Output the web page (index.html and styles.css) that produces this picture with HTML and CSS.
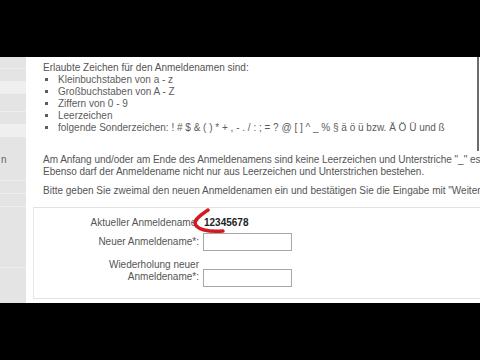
FILE: index.html
```html
<!DOCTYPE html>
<html lang="de">
<head>
    <meta charset="UTF-8">
    <meta name="viewport" content="width=device-width, initial-scale=1.0">
    <title>Anmeldename ändern</title>
    <link rel="stylesheet" href="styles.css">
</head>
<body>
    <div class="frame">
        <div class="band"></div>

        <div class="screen">
            <!-- Navigation (cut off at the left) -->
            <div class="sidebar">
                <div class="nav-line"></div>
                <div class="nav-item"></div>
                <div class="nav-line"></div>
                <div class="nav-item"></div>
                <div class="nav-text">n</div>
                <div class="nav-line low"></div>
                <div class="nav-line"></div>
                <div class="nav-line"></div>
                <div class="nav-line last"></div>
            </div>

            <div class="main">
                <!-- Allowed characters -->
                <div class="rules">
                    <p class="rules-title">Erlaubte Zeichen für den Anmeldenamen sind:</p>
                    <ul class="rules-list">
                        <li>Kleinbuchstaben von a - z</li>
                        <li>Großbuchstaben von A - Z</li>
                        <li>Ziffern von 0 - 9</li>
                        <li>Leerzeichen</li>
                        <li>folgende Sonderzeichen: ! # $ &amp; ( ) * + , - . / : ; = ? @ [ ] ^ _ % § ä ö ü bzw. Ä Ö Ü und ß</li>
                    </ul>
                </div>

                <p class="note tight">Am Anfang und/oder am Ende des Anmeldenamens sind keine Leerzeichen und Unterstriche "_" es<br>
                Ebenso darf der Anmeldename nicht nur aus Leerzeichen und Unterstrichen bestehen.</p>

                <p class="note hint">Bitte geben Sie zweimal den neuen Anmeldenamen ein und bestätigen Sie die Eingabe mit "Weiter</p>

                <!-- Form -->
                <form class="name-form">
                    <div class="row">
                        <span class="label">Aktueller Anmeldename:</span>
                        <span class="value">12345678</span>
                    </div>
                    <div class="row">
                        <label class="label" for="newName">Neuer Anmeldename*:</label>
                        <input class="field" type="text" id="newName">
                    </div>
                    <div class="row top">
                        <label class="label" for="repeatName">Wiederholung neuer<br>Anmeldename*:</label>
                        <input class="field shift" type="text" id="repeatName">
                    </div>

                    <!-- red marker drawn over the screenshot -->
                    <svg class="marker" width="40" height="30" viewBox="0 0 40 30">
                        <path d="M15 2 C 8 7, 2 11, 2 15 C 3 22, 16 24, 30 23" fill="none" stroke="#d21a1f" stroke-width="3.5" stroke-linecap="round"/>
                    </svg>
                </form>
            </div>
        </div>

        <div class="band"></div>
    </div>
</body>
</html>
```

FILE: styles.css
```css
/* Video frame */
body {
    margin: 0;
    background-color: #000;
    font-family: "Liberation Sans", Arial, sans-serif;
    font-size: 10px;
    color: #555;
}

.frame {
    width: 480px;
    height: 360px;
    display: flex;
    flex-direction: column;
}

.band {
    height: 57px;
    background-color: #000;
}

.screen {
    height: 246px;
    display: flex;
    background-color: #fff;
    overflow: hidden;
}

/* Sidebar */
.sidebar {
    width: 26px;
    flex-shrink: 0;
    background-color: #e4e4e4;
    padding-top: 11px;
    box-sizing: border-box;
}

.nav-line {
    height: 1px;
    margin-bottom: 12px;
    background-color: #eeeeee;
}

.nav-line.low {
    margin-top: 14px;
}

.nav-line.last {
    margin-top: 60px;
}

.nav-item {
    height: 13px;
    margin-bottom: 17px;
    background-color: #efefef;
}

.nav-text {
    margin-top: 15px;
    padding-left: 1px;
    line-height: 12px;
    color: #666;
}

/* Main column */
.main {
    flex: 1;
    padding-left: 7px;
    background-color: #fff;
    white-space: nowrap;
    overflow: hidden;
}

.rules {
    padding: 5px 0 17px 10px;
    margin-right: 1px;
    border-right: 2px solid #6c6c6c;
}

.rules-title {
    margin: 0;
    line-height: 12px;
}

.rules-list {
    margin: 0;
    padding-left: 15px;
    list-style: square;
    line-height: 12px;
    color: #5c5c5c;
}

.note {
    margin: 3px 0 0;
    padding-left: 10px;
    line-height: 12px;
}

.note.tight {
    letter-spacing: -0.03px;
}

.note.hint {
    margin-top: 7px;
    padding-bottom: 10px;
}

/* Form box */
.name-form {
    position: relative;
    margin: 0;
    padding: 9px 0 11px;
    border-top: 1px solid #e2e2e2;
    border-left: 1px solid #e8e8e8;
    border-bottom: 1px solid #e2e2e2;
}

.row {
    display: grid;
    grid-template-columns: 165px 90px;
    column-gap: 4px;
    align-items: center;
    margin-bottom: 4px;
}

.row.top {
    align-items: start;
    margin-top: 8px;
    margin-bottom: 0;
}

.label {
    text-align: right;
    line-height: 12px;
}

.value {
    font-weight: bold;
    color: #222;
    padding-left: 1px;
    line-height: 12px;
}

.field {
    width: 89px;
    height: 18px;
    box-sizing: border-box;
    margin: 0;
    border: 1px solid #a8a8a8;
    background-color: #fff;
}

.field.shift {
    margin-top: 10px;
}

.marker {
    position: absolute;
    left: 159px;
    top: 0;
}
```
